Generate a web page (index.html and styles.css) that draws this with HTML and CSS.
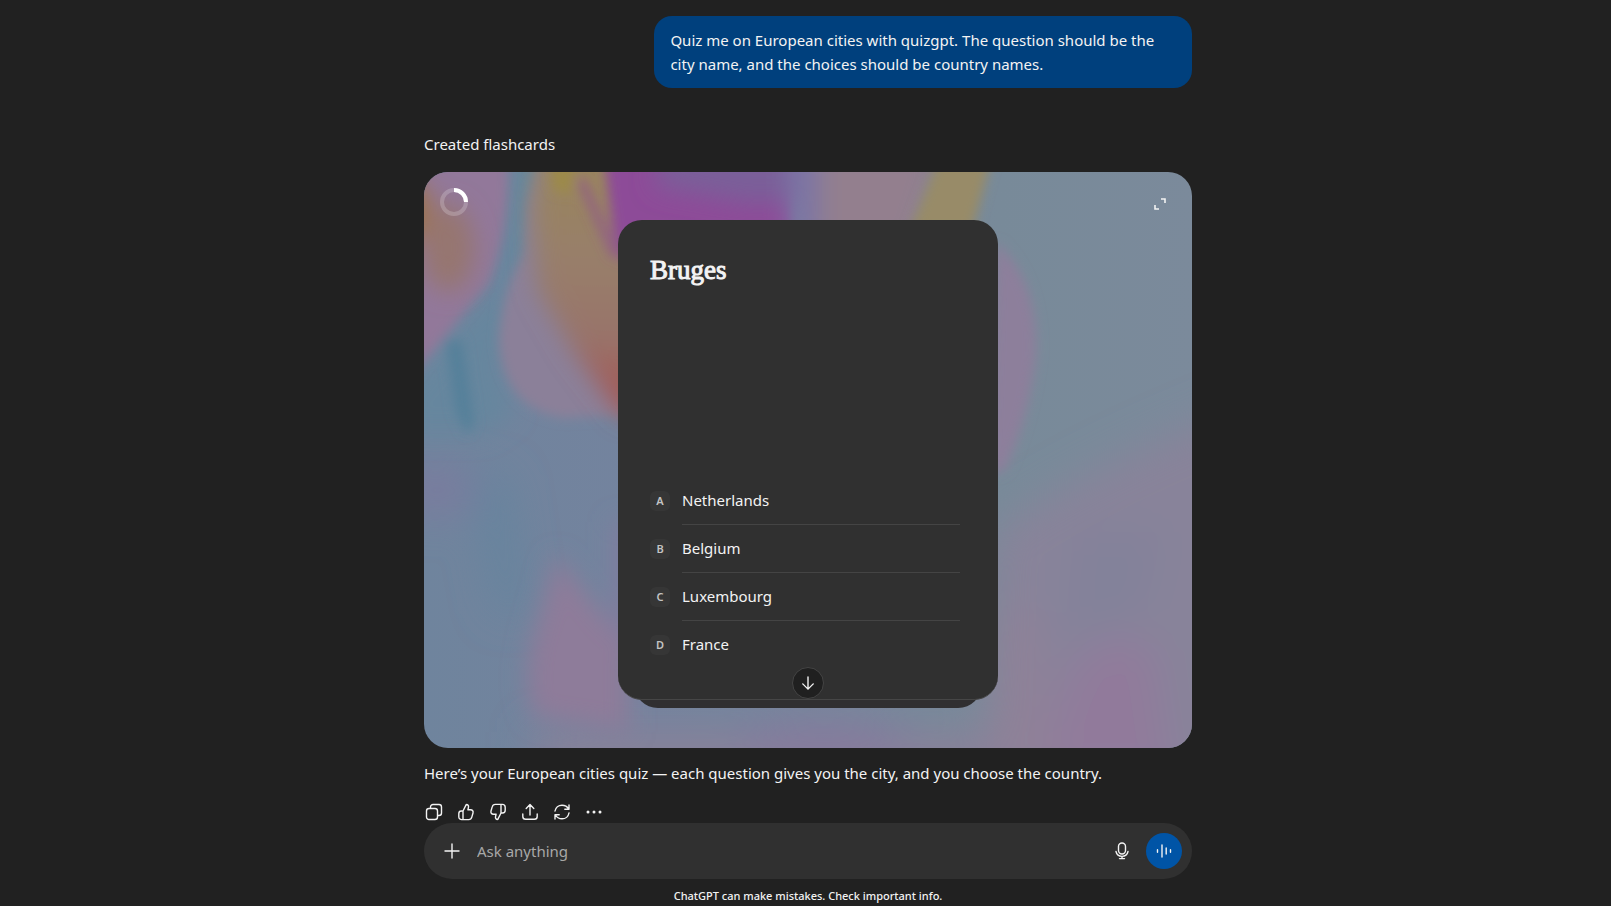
FILE: index.html
```
<!DOCTYPE html>
<html lang="en">
<head>
    <meta charset="UTF-8">
    <meta name="viewport" content="width=device-width, initial-scale=1.0">
    <title>European cities quiz</title>
    <link rel="stylesheet" href="styles.css">
</head>
<body>
    <main class="thread">
        <div class="message">Quiz me on European cities with quizgpt. The question should be the city name, and the choices should be country names.</div>

        <p class="status">Created flashcards</p>

        <section class="stage">
            <!-- Blurred colour backdrop -->
            <svg class="backdrop" viewBox="0 0 768 576" preserveAspectRatio="none" aria-hidden="true">
                <defs>
                    <filter id="soft" x="-30%" y="-30%" width="160%" height="160%"><feGaussianBlur stdDeviation="6"/></filter>
                    <filter id="medium" x="-50%" y="-50%" width="200%" height="200%"><feGaussianBlur stdDeviation="12"/></filter>
                    <filter id="softer" x="-50%" y="-50%" width="200%" height="200%"><feGaussianBlur stdDeviation="20"/></filter>
                    <linearGradient id="base" x1="0" y1="0" x2="1" y2="0">
                        <stop offset="0" stop-color="#6f849d"/>
                        <stop offset="0.3" stop-color="#74839e"/>
                        <stop offset="0.75" stop-color="#788a99"/>
                        <stop offset="1" stop-color="#7b8a9b"/>
                    </linearGradient>
                    <linearGradient id="tan" x1="0" y1="0" x2="0" y2="1">
                        <stop offset="0" stop-color="#99865a"/>
                        <stop offset="0.4" stop-color="#987f6a"/>
                        <stop offset="0.7" stop-color="#98746b"/>
                        <stop offset="0.9" stop-color="#a25c58"/>
                    </linearGradient>
                </defs>
                <rect width="768" height="576" fill="url(#base)"/>
                <g filter="url(#softer)">
                    <path d="M560 620 L570 360 Q660 295 830 230 V620H560Z" fill="#88839a"/>
                    <path d="M110 620 V560 H600 V620Z" fill="#888199"/>
                    <path d="M610 620 L650 490 Q700 450 730 480 L750 620Z" fill="#917a9b"/>
                    <path d="M570 620 V430 L610 440 L640 620Z" fill="#8f8198"/>
                    <path d="M640 470 L650 360 L740 360 L720 440Z" fill="#83829a"/>
                    <ellipse cx="10" cy="318" rx="45" ry="26" fill="#7a7c9e"/>
                    <path d="M50 305 L80 305 L100 440 L75 440Z" fill="#64849e"/>
                    <ellipse cx="400" cy="570" rx="90" ry="20" fill="#86799d"/>
                </g>
                <path d="M75 -20 H140 L110 100 Q95 140 75 195 L90 240 L60 262 H-20 V220 Q40 150 70 120Z" fill="#66869e" filter="url(#medium)"/>
                <g filter="url(#soft)">
                    <path d="M22 168 L38 168 L50 252 L43 262 L32 240Z" fill="#54809a"/>
                    <path d="M-20 -20 H84 Q88 55 64 112 Q32 150 -20 215Z" fill="#92789a"/>
                    <path d="M118 -20 L103 32 L100 82 Q78 115 75 168 Q80 238 140 246 L210 242 V-20Z" fill="#8b8099"/>
                </g>
                <g filter="url(#medium)">
                    <ellipse cx="24" cy="76" rx="26" ry="44" fill="#967670"/>
                    <path d="M-30 0 L6 20 L2 60 L-30 75Z" fill="#9d7345"/>
                    <path d="M118 -25 L108 40 L114 118 L150 180 L198 245 H230 V-25Z" fill="url(#tan)"/>
                </g>
                <g filter="url(#soft)">
                    <path d="M128 -12 H150 L146 22 L130 18Z" fill="#9c8a48"/>
                    <path d="M158 10 L190 82" stroke="#8e4f93" stroke-width="8" opacity="0.7"/>
                    <path d="M180 -15 H370 V60 H215 L200 92 L190 64Z" fill="#8d4b98"/>
                </g>
                <g filter="url(#medium)">
                    <path d="M240 -25 H400 V25 L330 32 L230 14Z" fill="#7a5f99"/>
                    <path d="M362 -25 H395 V70 H366Z" fill="#7c75a4"/>
                    <path d="M395 -25 H520 L490 75 H395Z" fill="#937f8e"/>
                </g>
                <g filter="url(#soft)">
                    <path d="M515 -15 H568 L548 60 H485Z" fill="#988b68"/>
                    <path d="M572 70 Q616 110 612 185 Q604 250 580 300 H565Z" fill="#8d7f9b"/>
                </g>
                <g filter="url(#medium)">
                    <path d="M132 382 L165 425 L205 475 V560 L110 545 Q94 505 115 445Z" fill="#8e7c9a"/>
                    <path d="M190 350 H215 V490 L190 450Z" fill="#817b9e"/>
                </g>
            </svg>

            <svg class="spinner" viewBox="0 0 28 28" role="img" aria-label="Progress">
                <circle cx="14" cy="14" r="12" class="spinner-track"/>
                <path d="M14 2 A12 12 0 0 1 26 14"/>
            </svg>
            <button class="expand" type="button" aria-label="Expand">
                <svg viewBox="0 0 12 12"><path d="M7 1 H11 V5 M1 7 V11 H5"/></svg>
            </button>

            <div class="deck">
                <article class="card">
                    <h2 class="question">Bruges</h2>
                    <ul class="choices">
                        <li><button class="choice" type="button"><span class="key">A</span><span class="label">Netherlands</span></button></li>
                        <li><button class="choice" type="button"><span class="key">B</span><span class="label">Belgium</span></button></li>
                        <li><button class="choice" type="button"><span class="key">C</span><span class="label">Luxembourg</span></button></li>
                        <li><button class="choice" type="button"><span class="key">D</span><span class="label">France</span></button></li>
                    </ul>
                </article>
                <button class="scroll-down" type="button" aria-label="Scroll to bottom">
                    <svg viewBox="0 0 16 16"><path d="M8 1 V15 M2 9 L8 15 L14 9"/></svg>
                </button>
            </div>
        </section>

        <p class="reply">Here’s your European cities quiz — each question gives you the city, and you choose the country.</p>

        <div class="actions">
            <button type="button" aria-label="Copy">
                <svg viewBox="0 0 18 18"><rect x="1.5" y="5.5" width="11" height="11" rx="2.5"/><path d="M5.5 5.2 V4 A2.5 2.5 0 0 1 8 1.5 H14 A2.5 2.5 0 0 1 16.5 4 V10 A2.5 2.5 0 0 1 14 12.5 H12.8"/></svg>
            </button>
            <button type="button" aria-label="Good response">
                <svg viewBox="0 0 18 18"><path d="M6 8 L9.2 1.6 C10.8 1.4 11.8 2.6 11.5 4.1 L10.9 6.8 H13.6 C15.5 6.8 16.5 8.3 16 10 L14.8 14.1 C14.4 15.7 13.3 16.6 11.7 16.6 H4.7 C3 16.6 1.8 15.4 1.8 13.7 V10.7 C1.8 9.1 2.9 8 4.4 8 Z M6 8 V16.4"/></svg>
            </button>
            <button type="button" aria-label="Bad response">
                <svg viewBox="0 0 18 18"><path d="M12 10 L8.8 16.4 C7.2 16.6 6.2 15.4 6.5 13.9 L7.1 11.2 H4.4 C2.5 11.2 1.5 9.7 2 8 L3.2 3.9 C3.6 2.3 4.7 1.4 6.3 1.4 H13.3 C15 1.4 16.2 2.6 16.2 4.3 V7.3 C16.2 8.9 15.1 10 13.6 10 Z M12 10 V1.6"/></svg>
            </button>
            <button type="button" aria-label="Share">
                <svg viewBox="0 0 18 18"><path d="M9 12 V1.8 M5.2 5.4 L9 1.6 L12.8 5.4 M1.8 11 V13.4 C1.8 15.2 2.8 16.2 4.6 16.2 H13.4 C15.2 16.2 16.2 15.2 16.2 13.4 V11"/></svg>
            </button>
            <button type="button" aria-label="Try again">
                <svg viewBox="0 0 18 18"><path d="M2 8 C2.6 4.6 5.5 2.2 9 2.2 C11.8 2.2 14.3 3.6 15.7 6 M16 2 V6.2 H11.8 M16 10 C15.4 13.4 12.5 15.8 9 15.8 C6.2 15.8 3.7 14.4 2.3 12 M2 16 V11.8 H6.2"/></svg>
            </button>
            <button type="button" aria-label="More actions">
                <svg viewBox="0 0 18 18" class="dots"><circle cx="3" cy="9" r="1.5"/><circle cx="9" cy="9" r="1.5"/><circle cx="15" cy="9" r="1.5"/></svg>
            </button>
        </div>
    </main>

    <footer class="dock">
        <form class="composer">
            <button class="tool" type="button" aria-label="Add files">
                <svg viewBox="0 0 18 18"><path d="M9 2 V16 M2 9 H16"/></svg>
            </button>
            <input class="prompt" type="text" placeholder="Ask anything" aria-label="Ask anything">
            <button class="tool" type="button" aria-label="Dictate">
                <svg viewBox="0 0 18 18"><rect x="5.5" y="1" width="7" height="11" rx="3.5"/><path d="M3 9.5 C3.7 12.6 6 14.4 9 14.4 C12 14.4 14.3 12.6 15 9.5 M9 14.4 V16.6 M6.5 16.6 H11.5"/></svg>
            </button>
            <button class="voice" type="button" aria-label="Voice mode">
                <svg viewBox="0 0 18 18"><path d="M2.5 7.8 V10.2 M7 3 V15 M11.2 6 V12 M15.5 7.8 V10.2"/></svg>
            </button>
        </form>
        <p class="notice">ChatGPT can make mistakes. Check important info.</p>
    </footer>
</body>
</html>
```
FILE: styles.css
```
* {
    box-sizing: border-box;
}
body {
    display: flex;
    flex-direction: column;
    align-items: center;
    min-height: 100vh;
    margin: 0;
    padding-left: 5px;
    background: #212121;
    color: #f3f3f3;
    font: 15px/24px "Noto Sans", "Open Sans", sans-serif;
}
p, h2, ul {
    margin: 0;
    padding: 0;
}
button {
    padding: 0;
    border: 0;
    background: none;
    color: inherit;
    font: inherit;
    cursor: pointer;
}
svg {
    display: block;
    fill: none;
    stroke: currentColor;
    stroke-width: 1.4;
    stroke-linecap: round;
    stroke-linejoin: round;
}

/* Conversation */
.thread {
    display: flex;
    flex: 1;
    flex-direction: column;
    width: 100%;
    max-width: 768px;
    padding-top: 16px;
}
.message {
    align-self: flex-end;
    max-width: 70%;
    margin-bottom: 44px;
    padding: 12px 16px;
    border-radius: 18px;
    background: #00407d;
}
.status {
    margin-bottom: 16px;
}
.reply {
    margin: 13px 0 17px;
}

/* Flashcard stage */
.stage {
    position: relative;
    display: flex;
    justify-content: center;
    padding: 48px 24px;
    aspect-ratio: 4 / 3;
    border-radius: 24px;
    overflow: hidden;
}
.backdrop {
    position: absolute;
    inset: 0;
    width: 100%;
    height: 100%;
    stroke: none;
}
.spinner {
    position: absolute;
    top: 16px;
    left: 16px;
    width: 28px;
    height: 28px;
    stroke: #fff;
    stroke-width: 4;
    stroke-linecap: butt;
}
.spinner-track {
    opacity: 0.2;
}
.expand {
    position: absolute;
    top: 16px;
    right: 16px;
    display: grid;
    place-items: center;
    width: 32px;
    height: 32px;
}
.expand svg {
    width: 12px;
    height: 12px;
    stroke-width: 1.6;
    stroke-linecap: butt;
    stroke-linejoin: miter;
}
.deck {
    position: relative;
    width: 380px;
}
.deck::before {
    content: "";
    position: absolute;
    inset: 24px 16px -8px;
    border-radius: 24px;
    background: #302f31;
}
.card {
    position: relative;
    display: flex;
    flex-direction: column;
    justify-content: space-between;
    height: 100%;
    padding: 32px 32px 30px;
    border-bottom: 1px solid #464646;
    border-radius: 24px;
    background: #303030;
}
.question {
    font: 27px/36px "Liberation Serif", serif;
    -webkit-text-stroke: 1px currentColor;
}
.choices {
    list-style: none;
}
.choice {
    display: flex;
    align-items: center;
    gap: 12px;
    width: 100%;
    height: 48px;
    padding-right: 6px;
    text-align: left;
}
.key {
    width: 20px;
    border-radius: 6px;
    background: #363636;
    color: #c4c4c4;
    font-size: 11px;
    font-weight: 600;
    line-height: 20px;
    text-align: center;
}
.label {
    flex: 1;
    border-bottom: 1px solid #444;
    line-height: 47px;
}
li:last-child .label {
    border-color: transparent;
}
.scroll-down {
    position: absolute;
    bottom: 1px;
    left: calc(50% - 16px);
    display: grid;
    place-items: center;
    width: 32px;
    height: 32px;
    border: 1px solid #444;
    border-radius: 50%;
    background: #202020;
}
.scroll-down svg {
    width: 14px;
    height: 14px;
    stroke-width: 1.6;
}

/* Message actions */
.actions {
    display: flex;
    margin-left: -6px;
}
.actions button {
    display: grid;
    place-items: center;
    width: 32px;
    height: 20px;
}
.actions svg, .tool svg, .voice svg {
    width: 18px;
    height: 18px;
}
.actions .dots {
    fill: currentColor;
    stroke: none;
}

/* Composer */
.dock {
    position: sticky;
    bottom: 0;
    width: 100%;
    max-width: 768px;
    background: #212121;
}
.composer {
    display: flex;
    align-items: center;
    height: 56px;
    padding: 0 10px;
    border-radius: 28px;
    background: #303030;
}
.tool {
    display: grid;
    place-items: center;
    width: 36px;
    height: 36px;
}
.prompt {
    flex: 1;
    min-width: 0;
    margin-left: 7px;
    padding: 0;
    border: 0;
    outline: 0;
    background: none;
    color: inherit;
    font: inherit;
}
.prompt::placeholder {
    color: #a8a8a8;
    opacity: 1;
}
.voice {
    display: grid;
    place-items: center;
    width: 36px;
    height: 36px;
    margin-left: 6px;
    border-radius: 50%;
    background: #0054a6;
}
.notice {
    padding: 8px 0 1px;
    font-size: 11px;
    font-weight: 500;
    line-height: 18px;
    text-align: center;
}
```
